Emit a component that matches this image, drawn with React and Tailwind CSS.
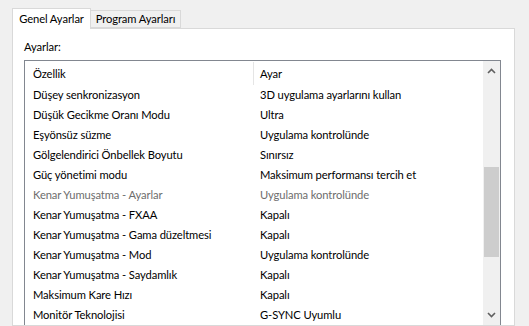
import React from "react";

const rows = [
  ["Düşey senkronizasyon", "3D uygulama ayarlarını kullan"],
  ["Düşük Gecikme Oranı Modu", "Ultra"],
  ["Eşyönsüz süzme", "Uygulama kontrolünde"],
  ["Gölgelendirici Önbellek Boyutu", "Sınırsız"],
  ["Güç yönetimi modu", "Maksimum performansı tercih et"],
  ["Kenar Yumuşatma - Ayarlar", "Uygulama kontrolünde", true],
  ["Kenar Yumuşatma - FXAA", "Kapalı"],
  ["Kenar Yumuşatma - Gama düzeltmesi", "Kapalı"],
  ["Kenar Yumuşatma - Mod", "Uygulama kontrolünde"],
  ["Kenar Yumuşatma - Saydamlık", "Kapalı"],
  ["Maksimum Kare Hızı", "Kapalı"],
  ["Monitör Teknolojisi", "G-SYNC Uyumlu"],
];

export default function App() {
  return (
    <div className="w-[529px] h-[326px] overflow-hidden bg-[#f0f0f0] flex flex-col font-['Lato',sans-serif] text-[11.2px] tracking-[-0.1px] text-black leading-none whitespace-nowrap">
      <div className="flex items-end h-[29px] pl-[12px] pt-[8px] shrink-0 relative z-10 -mb-px">
        <div className="h-[21px] w-[79px] bg-white border border-b-0 border-[#d9d9d9] flex items-center justify-center pb-[1px]">
          Genel Ayarlar
        </div>
        <div className="h-[18px] w-[90px] bg-[#f0f0f0] border border-l-0 border-[#d9d9d9] flex items-center justify-center mb-px">
          Program Ayarları
        </div>
      </div>
      <div className="ml-[12px] w-[503px] flex-1 bg-white border border-[#d9d9d9] pl-[11px] flex flex-col">
        <div className="h-[31px] flex items-center pt-[5px]">Ayarlar:</div>
        <div className="w-[477px] flex-1 border border-[#828790] border-b-0 flex">
          <div className="flex-1 flex flex-col">
            <div className="h-[24px] flex shrink-0">
              <div className="w-[228px] pl-[8px] flex items-center pt-[1px]">Özellik</div>
              <div className="w-px bg-[#e5e5e5] mt-[1px]"></div>
              <div className="flex-1 pl-[6px] flex items-center pt-[1px]">Ayar</div>
            </div>
            {rows.map(([a, b, dis]) => (
              <div key={a} className={"h-[20px] flex shrink-0 " + (dis ? "text-[#6d6d6d]" : "text-black")}>
                <div className="w-[229px] pl-[8px] flex items-center">{a}</div>
                <div className="flex-1 pl-[6px] flex items-center">{b}</div>
              </div>
            ))}
          </div>
          <div className="w-[17px] bg-[#f0f0f0] flex flex-col items-center">
            <div className="h-[20px] w-full flex items-center justify-center">
              <svg width="9" height="6" viewBox="0 0 9 6">
                <path d="M1 5 L4.5 1.5 L8 5" fill="none" stroke="#606060" strokeWidth="1.6" />
              </svg>
            </div>
            <div className="h-[86px]"></div>
            <div className="h-[90px] w-[15px] bg-[#cdcdcd]"></div>
            <div className="flex-1"></div>
            <div className="h-[20px] w-full flex items-center justify-center">
              <svg width="9" height="6" viewBox="0 0 9 6">
                <path d="M1 1 L4.5 4.5 L8 1" fill="none" stroke="#606060" strokeWidth="1.6" />
              </svg>
            </div>
          </div>
        </div>
      </div>
    </div>
  );
}
